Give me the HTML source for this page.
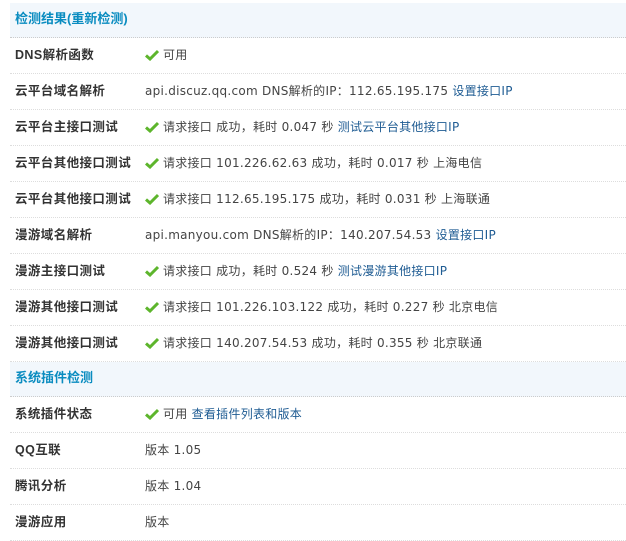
<!DOCTYPE html>
<html><head><meta charset="utf-8"><style>
html,body{margin:0;background:#fff;height:518px;overflow:hidden;}
body{font:12px "DejaVu Sans","Noto Sans CJK SC",sans-serif;color:#444;}
.w{position:absolute;left:10px;top:3px;width:616px;}
.h{background:#F2F7FC;color:#0A8CC0;font-weight:bold;height:34px;line-height:32px;padding-left:5px;border-bottom:1px dotted #ccc;font-family:"Liberation Sans","Noto Sans CJK SC",sans-serif;font-size:13px}
.r{height:35px;line-height:35px;border-bottom:1px dotted #ddd;position:relative;}
.r b{position:absolute;left:5px;color:#333;font-weight:bold;font-family:"Liberation Sans","Noto Sans CJK SC",sans-serif;font-size:12.5px;letter-spacing:0.4px}
.r span{position:absolute;left:135px;white-space:nowrap;letter-spacing:0.27px}
a{color:#1F5C93;text-decoration:none}
svg{vertical-align:-2px;margin-right:4px}
</style></head><body><div class="w">
<div class="h">检测结果(重新检测)</div>
<div class="r"><b>DNS解析函数</b><span><svg width="14" height="12" viewBox="0 0 14 12"><path d="M1 6.5L5 10L13 2" stroke="#5DB52C" stroke-width="3" fill="none"/></svg>可用</span></div>
<div class="r"><b>云平台域名解析</b><span>api.discuz.qq.com DNS解析的IP：112.65.195.175 <a>设置接口IP</a></span></div>
<div class="r"><b>云平台主接口测试</b><span><svg width="14" height="12" viewBox="0 0 14 12"><path d="M1 6.5L5 10L13 2" stroke="#5DB52C" stroke-width="3" fill="none"/></svg>请求接口 成功，耗时 0.047 秒 <a>测试云平台其他接口IP</a></span></div>
<div class="r"><b>云平台其他接口测试</b><span><svg width="14" height="12" viewBox="0 0 14 12"><path d="M1 6.5L5 10L13 2" stroke="#5DB52C" stroke-width="3" fill="none"/></svg>请求接口 101.226.62.63 成功，耗时 0.017 秒 上海电信</span></div>
<div class="r"><b>云平台其他接口测试</b><span><svg width="14" height="12" viewBox="0 0 14 12"><path d="M1 6.5L5 10L13 2" stroke="#5DB52C" stroke-width="3" fill="none"/></svg>请求接口 112.65.195.175 成功，耗时 0.031 秒 上海联通</span></div>
<div class="r"><b>漫游域名解析</b><span>api.manyou.com DNS解析的IP：140.207.54.53 <a>设置接口IP</a></span></div>
<div class="r"><b>漫游主接口测试</b><span><svg width="14" height="12" viewBox="0 0 14 12"><path d="M1 6.5L5 10L13 2" stroke="#5DB52C" stroke-width="3" fill="none"/></svg>请求接口 成功，耗时 0.524 秒 <a>测试漫游其他接口IP</a></span></div>
<div class="r"><b>漫游其他接口测试</b><span><svg width="14" height="12" viewBox="0 0 14 12"><path d="M1 6.5L5 10L13 2" stroke="#5DB52C" stroke-width="3" fill="none"/></svg>请求接口 101.226.103.122 成功，耗时 0.227 秒 北京电信</span></div>
<div class="r"><b>漫游其他接口测试</b><span><svg width="14" height="12" viewBox="0 0 14 12"><path d="M1 6.5L5 10L13 2" stroke="#5DB52C" stroke-width="3" fill="none"/></svg>请求接口 140.207.54.53 成功，耗时 0.355 秒 北京联通</span></div>
<div class="h" style="height:34px">系统插件检测</div>
<div class="r"><b>系统插件状态</b><span><svg width="14" height="12" viewBox="0 0 14 12"><path d="M1 6.5L5 10L13 2" stroke="#5DB52C" stroke-width="3" fill="none"/></svg>可用 <a>查看插件列表和版本</a></span></div>
<div class="r"><b>QQ互联</b><span>版本 1.05</span></div>
<div class="r"><b>腾讯分析</b><span>版本 1.04</span></div>
<div class="r"><b>漫游应用</b><span>版本</span></div>
</div></body></html>
